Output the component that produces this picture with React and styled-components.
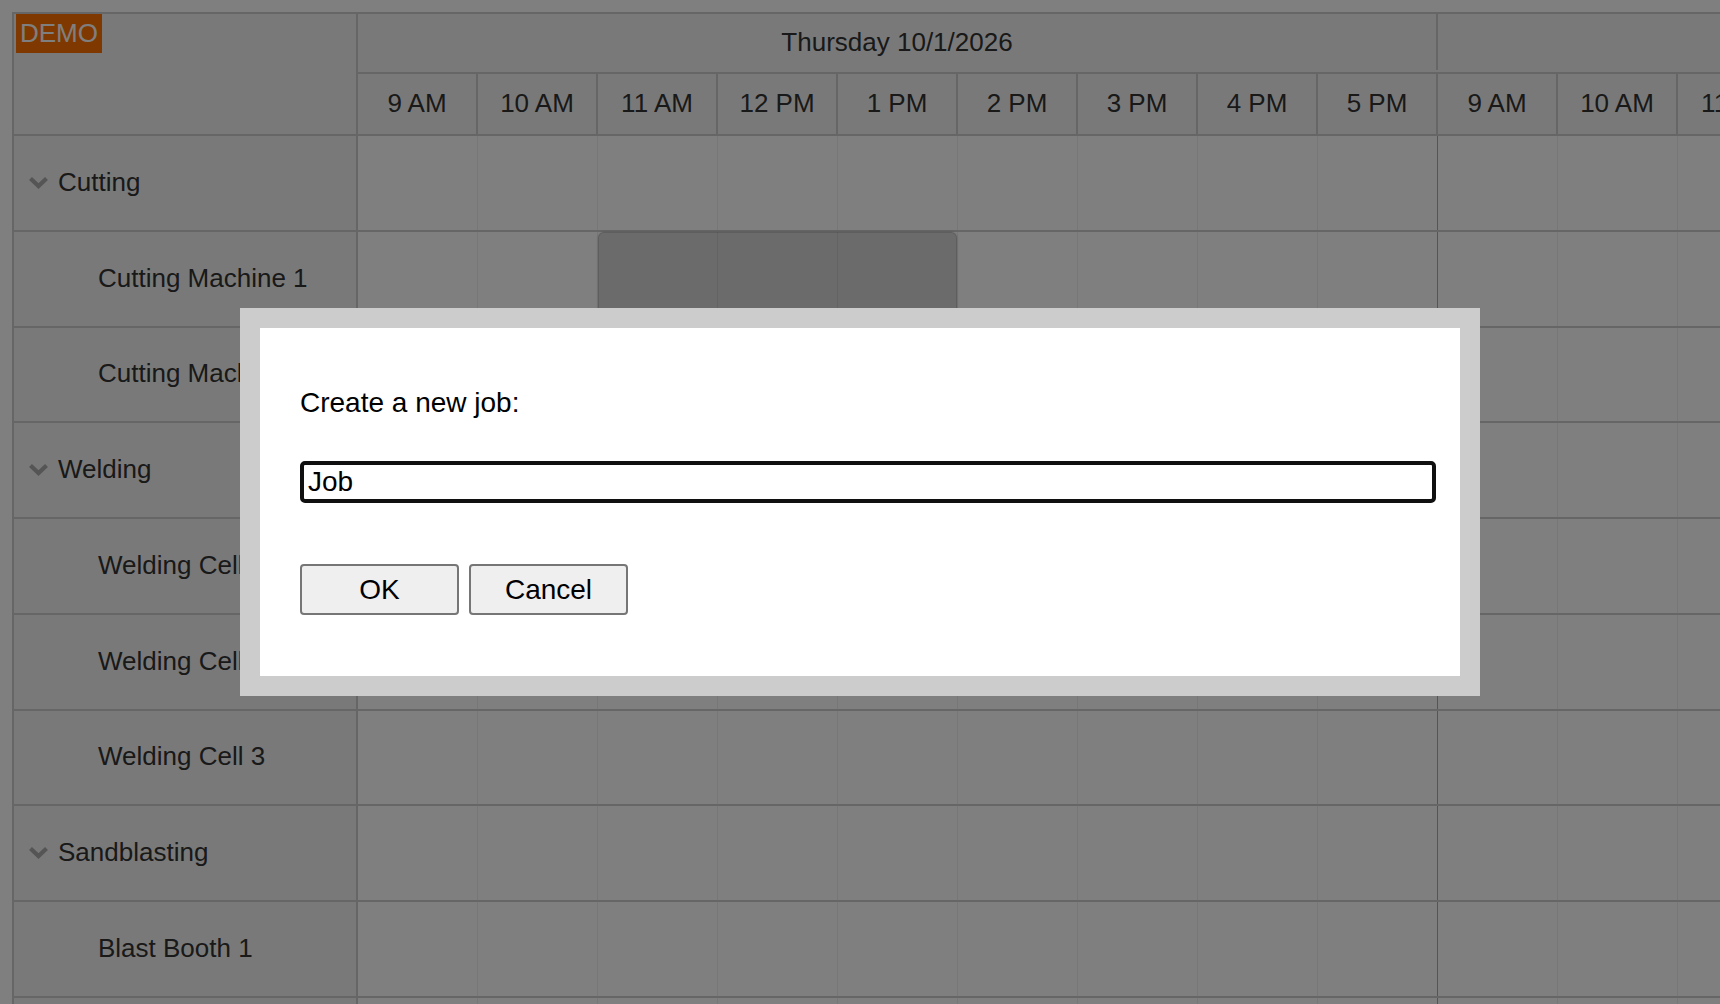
import React from "react";
import styled, { createGlobalStyle } from "styled-components";

const GlobalStyle = createGlobalStyle`
  html, body {
    margin: 0;
    padding: 0;
    overflow: hidden;
    background: #ffffff;
    font-family: "Liberation Sans", Arial, sans-serif;
  }
  * {
    box-sizing: border-box;
  }
`;

const CELL = 120;
const ROW_H = 95.75;

const Page = styled.div`
  padding: 12px 0 0 12px;
  height: 100vh;
  overflow: hidden;
`;

const Scheduler = styled.div`
  display: flex;
  flex-direction: column;
  width: max-content;
  border-top: 2px solid #cccccc;
  border-left: 2px solid #cccccc;
  color: #333333;
  font-size: 26px;
`;

const HeaderRow = styled.div`
  display: flex;
`;

const Corner = styled.div`
  width: 344px;
  height: 122px;
  background: #f3f3f3;
  border-right: 2px solid #cccccc;
  border-bottom: 2px solid #cccccc;
  padding-left: 2px;
`;

const DemoBadge = styled.span`
  display: inline-block;
  height: 39px;
  line-height: 39px;
  padding: 0 4px;
  background: #ff7000;
  color: #ffffff;
  font-size: 26px;
`;

const TimeHeader = styled.div`
  display: flex;
  flex-direction: column;
  background: #f3f3f3;
`;

const DateRow = styled.div`
  display: flex;
  height: 60px;
  padding-bottom: 2px;
  border-bottom: 2px solid #cccccc;
`;

const DateCell = styled.div`
  width: ${(p) => p.$cols * CELL}px;
  display: flex;
  align-items: center;
  justify-content: center;
  border-right: 2px solid #cccccc;
  white-space: nowrap;
`;

const HourRow = styled.div`
  display: flex;
  height: 62px;
  border-bottom: 2px solid #cccccc;
`;

const HourCell = styled.div`
  width: ${CELL}px;
  display: flex;
  align-items: center;
  justify-content: center;
  padding-bottom: 2px;
  border-right: 2px solid #cccccc;
  white-space: nowrap;
`;

const Row = styled.div`
  display: flex;
  height: ${ROW_H}px;
`;

const RowHeader = styled.div`
  width: 344px;
  display: flex;
  align-items: center;
  gap: 9px;
  padding-left: ${(p) => (p.$group ? 14 : 84)}px;
  padding-bottom: 1px;
  background: #f3f3f3;
  border-right: 2px solid #cccccc;
  border-bottom: 2px solid #cccccc;
  white-space: nowrap;
`;

const Chevron = styled.svg`
  width: 21px;
  height: 13px;
  flex: none;
`;

const CellStrip = styled.div`
  position: relative;
  display: flex;
  border-bottom: 2px solid #cccccc;
`;

const Cell = styled.div`
  width: ${CELL}px;
  background: #ffffff;
  border-right: 1px solid ${(p) => (p.$dayEnd ? "#aaaaaa" : "#eeeeee")};
`;

const Selection = styled.div`
  position: absolute;
  top: 0;
  left: ${(p) => p.$start * CELL}px;
  width: ${(p) => p.$span * CELL - 1}px;
  height: 92px;
  background: rgba(0, 0, 0, 0.16);
  border: 1px solid rgba(0, 0, 0, 0.12);
  border-radius: 6px;
  box-shadow: 0 0 3px rgba(0, 0, 0, 0.15);
`;

const Overlay = styled.div`
  position: fixed;
  inset: 0;
  background: rgba(0, 0, 0, 0.5);
  display: flex;
  align-items: center;
  justify-content: center;
`;

const Dialog = styled.div`
  background: #cccccc;
  padding: 20px;
`;

const DialogBody = styled.form`
  width: 1200px;
  background: #ffffff;
  padding: 59px 24px 61px 40px;
  color: #000000;
`;

const Prompt = styled.div`
  font-size: 28px;
  line-height: 32px;
`;

const JobInput = styled.input`
  display: block;
  width: 100%;
  height: 42px;
  margin-top: 42px;
  padding: 0 4px;
  border: 4px solid #101010;
  border-radius: 5px;
  outline: none;
  font-family: "Liberation Sans", Arial, sans-serif;
  font-size: 28px;
  color: #000000;
`;

const Buttons = styled.div`
  display: flex;
  gap: 10px;
  margin-top: 61px;
`;

const Button = styled.button`
  width: 159px;
  height: 51px;
  padding: 0;
  background: #efefef;
  border: 2px solid #767676;
  border-radius: 4px;
  font-family: "Liberation Sans", Arial, sans-serif;
  font-size: 28px;
  color: #000000;
`;

const hours = ["9 AM", "10 AM", "11 AM", "12 PM", "1 PM", "2 PM", "3 PM", "4 PM", "5 PM"];
const days = ["Thursday 10/1/2026", "Friday 10/2/2026"];

const rows = [
  { name: "Cutting", group: true },
  { name: "Cutting Machine 1", selection: { start: 2, span: 3 } },
  { name: "Cutting Machine 2" },
  { name: "Welding", group: true },
  { name: "Welding Cell 1" },
  { name: "Welding Cell 2" },
  { name: "Welding Cell 3" },
  { name: "Sandblasting", group: true },
  { name: "Blast Booth 1" },
  { name: "Blast Booth 2" },
];

function ChevronDown() {
  return (
    <Chevron viewBox="0 0 21 13">
      <polyline points="2.5,2.5 10.5,10 18.5,2.5" fill="none" stroke="#aaaaaa" strokeWidth="4.2" />
    </Chevron>
  );
}

function App() {
  const columns = days.flatMap((d) => hours.map((h, i) => ({ key: d + h, label: h, dayEnd: i === hours.length - 1 })));

  return (
    <>
      <GlobalStyle />
      <Page>
        <Scheduler>
          <HeaderRow>
            <Corner>
              <DemoBadge>DEMO</DemoBadge>
            </Corner>
            <TimeHeader>
              <DateRow>
                {days.map((d) => (
                  <DateCell key={d} $cols={hours.length}>{d}</DateCell>
                ))}
              </DateRow>
              <HourRow>
                {columns.map((c) => (
                  <HourCell key={c.key}>{c.label}</HourCell>
                ))}
              </HourRow>
            </TimeHeader>
          </HeaderRow>
          {rows.map((r) => (
            <Row key={r.name}>
              <RowHeader $group={r.group}>
                {r.group && <ChevronDown />}
                {r.name}
              </RowHeader>
              <CellStrip>
                {columns.map((c) => (
                  <Cell key={c.key} $dayEnd={c.dayEnd} />
                ))}
                {r.selection && <Selection $start={r.selection.start} $span={r.selection.span} />}
              </CellStrip>
            </Row>
          ))}
        </Scheduler>
      </Page>
      <Overlay>
        <Dialog>
          <DialogBody onSubmit={(e) => e.preventDefault()}>
            <Prompt>Create a new job:</Prompt>
            <JobInput type="text" defaultValue="Job" />
            <Buttons>
              <Button type="submit">OK</Button>
              <Button type="button">Cancel</Button>
            </Buttons>
          </DialogBody>
        </Dialog>
      </Overlay>
    </>
  );
}

export default App;
